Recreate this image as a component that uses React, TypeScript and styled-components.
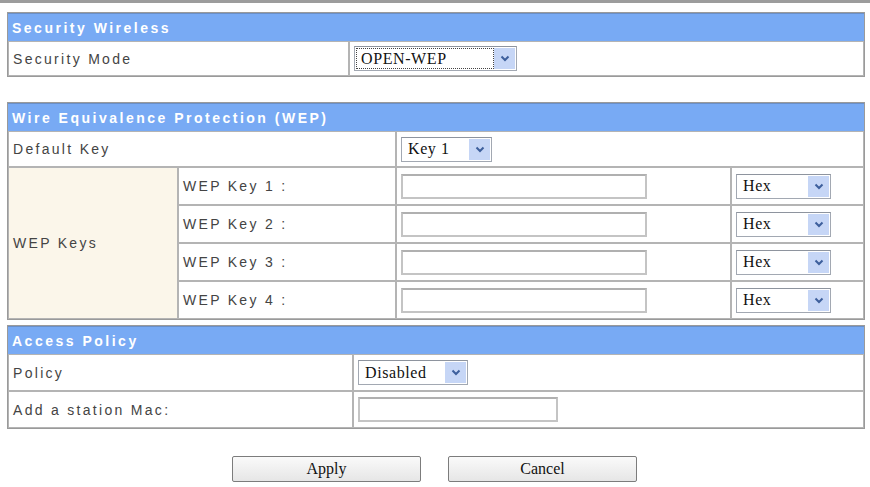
import styled, { createGlobalStyle } from 'styled-components';

const GlobalStyle = createGlobalStyle`
  html, body {
    margin: 0;
    padding: 0;
    background: #ffffff;
  }
  body {
    font-family: 'Liberation Sans', Arial, sans-serif;
  }
`;

const Page = styled.div`
  width: 870px;
  height: 487px;
  overflow: hidden;
  background: #fff;
`;

const TopRule = styled.div`
  height: 3px;
  background: #9c9c9c;
`;

const Content = styled.div`
  padding: 9px 5px 0 7px;
`;

const Table = styled.table<{ $gap?: number }>`
  width: 858px;
  border-collapse: separate;
  border-spacing: 0;
  border: 1px solid #9a9a9a;
  table-layout: fixed;
  margin-top: ${(p) => p.$gap ?? 0}px;
`;

const HeadCell = styled.th`
  height: 27px;
  padding: 0 0 0 4px;
  background: #78aaf4;
  border-top: 1px solid #6a8fc7;
  color: #ffffff;
  font-family: 'Liberation Sans', Arial, sans-serif;
  font-size: 14px;
  font-weight: bold;
  letter-spacing: 2.5px;
  text-align: left;
  vertical-align: middle;
`;

const Cell = styled.td<{ $h?: number; $tint?: boolean }>`
  height: ${(p) => p.$h ?? 34}px;
  padding: 0 0 0 4px;
  border: 1px solid #b4b4b4;
  background: ${(p) => (p.$tint ? '#fbf6ea' : '#ffffff')};
  color: #444444;
  font-family: 'Liberation Sans', Arial, sans-serif;
  font-size: 14px;
  letter-spacing: 2.3px;
  white-space: nowrap;
  vertical-align: middle;
`;

const Select = styled.div<{ $w: number }>`
  display: flex;
  align-items: stretch;
  width: ${(p) => p.$w}px;
  height: 25px;
  box-sizing: border-box;
  border: 1px solid #a2a8b2;
  border-top-color: #8e949e;
  background: #fff;
  padding: 1px;
`;

const SelectText = styled.div<{ $focus?: boolean }>`
  flex: 1;
  display: flex;
  align-items: center;
  padding-left: 4px;
  font-family: 'Liberation Serif', 'Times New Roman', serif;
  font-size: 16px;
  letter-spacing: 0.6px;
  color: #111;
  border: 1px ${(p) => (p.$focus ? 'dotted #444' : 'solid transparent')};
`;

const Arrow = styled.div`
  width: 21px;
  display: flex;
  align-items: center;
  justify-content: center;
  background: #c6d6f6;
`;

const TextBox = styled.div<{ $w: number }>`
  width: ${(p) => p.$w}px;
  height: 25px;
  box-sizing: border-box;
  border: 2px solid #c4c4c4;
  border-top-color: #b0b0b0;
  background: #fff;
`;

const ButtonRow = styled.div`
  display: flex;
  gap: 27px;
  padding: 27px 0 0 225px;
`;

const Button = styled.button`
  width: 189px;
  height: 26px;
  border: 1px solid #7c7c7c;
  border-radius: 2px;
  background: linear-gradient(#fafafa, #e6e6e6);
  font-family: 'Liberation Serif', 'Times New Roman', serif;
  font-size: 16px;
  color: #111;
  padding: 0;
`;

const Chevron = () => (
  <svg width="10" height="7" viewBox="0 0 10 7">
    <path d="M1.5 1.5 L5 5 L8.5 1.5" fill="none" stroke="#3d5f9c" strokeWidth="2" />
  </svg>
);

const Dropdown = ({ w, value, focus }: { w: number; value: string; focus?: boolean }) => (
  <Select $w={w}>
    <SelectText $focus={focus}>{value}</SelectText>
    <Arrow>
      <Chevron />
    </Arrow>
  </Select>
);

const keys = [1, 2, 3, 4];

export default function App() {
  return (
    <Page>
      <GlobalStyle />
      <TopRule />
      <Content>
        <Table>
          <colgroup>
            <col style={{ width: 341 }} />
            <col />
          </colgroup>
          <thead>
            <tr>
              <HeadCell colSpan={2}>Security Wireless</HeadCell>
            </tr>
          </thead>
          <tbody>
            <tr>
              <Cell $h={33}>Security Mode</Cell>
              <Cell $h={33}>
                <Dropdown w={163} value="OPEN-WEP" focus />
              </Cell>
            </tr>
          </tbody>
        </Table>

        <Table $gap={25}>
          <colgroup>
            <col style={{ width: 170 }} />
            <col style={{ width: 218 }} />
            <col style={{ width: 335 }} />
            <col />
          </colgroup>
          <thead>
            <tr>
              <HeadCell colSpan={4}>Wire Equivalence Protection (WEP)</HeadCell>
            </tr>
          </thead>
          <tbody>
            <tr>
              <Cell colSpan={2} $h={34}>Default Key</Cell>
              <Cell colSpan={2} $h={34}>
                <Dropdown w={91} value="Key 1" />
              </Cell>
            </tr>
            {keys.map((k) => (
              <tr key={k}>
                {k === 1 && (
                  <Cell rowSpan={4} $tint>
                    WEP Keys
                  </Cell>
                )}
                <Cell $h={36}>WEP Key {k} :</Cell>
                <Cell $h={36}>
                  <TextBox $w={246} />
                </Cell>
                <Cell $h={36}>
                  <Dropdown w={95} value="Hex" />
                </Cell>
              </tr>
            ))}
          </tbody>
        </Table>

        <Table $gap={5}>
          <colgroup>
            <col style={{ width: 345 }} />
            <col />
          </colgroup>
          <thead>
            <tr>
              <HeadCell colSpan={2}>Access Policy</HeadCell>
            </tr>
          </thead>
          <tbody>
            <tr>
              <Cell $h={35}>Policy</Cell>
              <Cell $h={35}>
                <Dropdown w={110} value="Disabled" />
              </Cell>
            </tr>
            <tr>
              <Cell $h={35}>Add a station Mac:</Cell>
              <Cell $h={35}>
                <TextBox $w={200} />
              </Cell>
            </tr>
          </tbody>
        </Table>

        <ButtonRow>
          <Button>Apply</Button>
          <Button>Cancel</Button>
        </ButtonRow>
      </Content>
    </Page>
  );
}
